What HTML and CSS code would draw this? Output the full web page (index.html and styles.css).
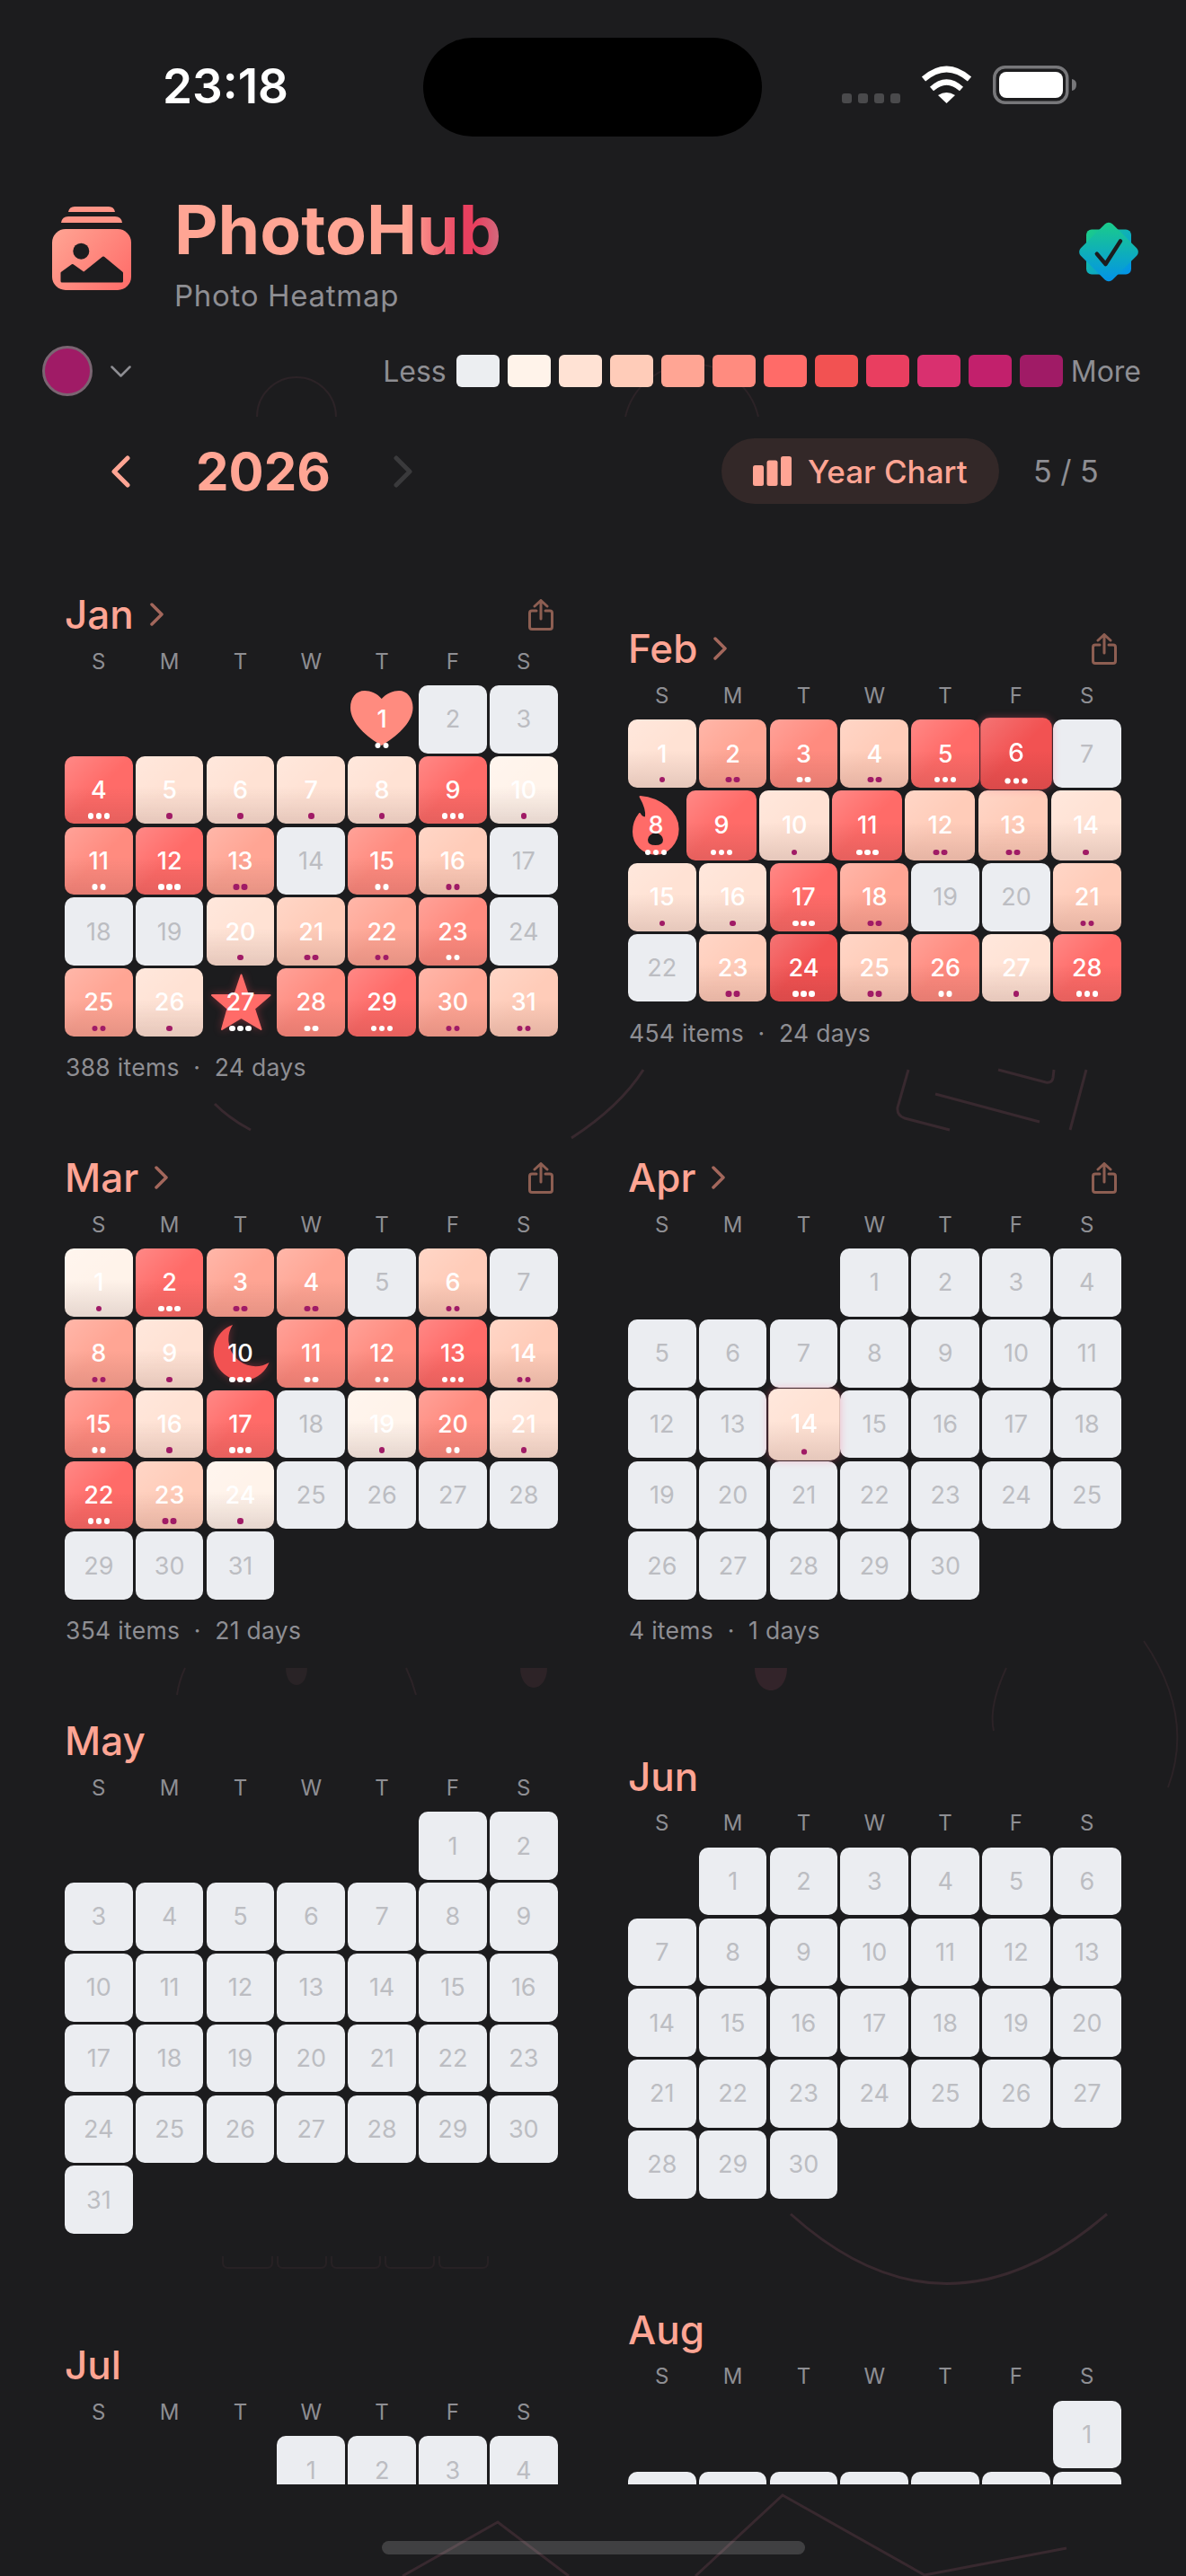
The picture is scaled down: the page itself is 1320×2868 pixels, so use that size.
FILE: index.html
```html
<!DOCTYPE html>
<html lang="en">
<head>
<meta charset="utf-8">
<title>PhotoHub</title>
<link rel="stylesheet" href="styles.css">
</head>
<body>
<div class="page">
<svg class="decor" width="1320" height="2868" viewBox="0 0 1320 2868" fill="none">
  <g class="faint">
    <path d="M286 464A44 44 0 0 1 374 464"/>
    <path d="M696 464A76 76 0 0 1 844 464"/>
    <path d="M206 1857Q199 1872 197 1887M452 1857Q459 1872 463 1887M1120 1857Q1100 1900 1106 1927M1273 1827Q1330 1910 1300 1990"/>
  </g>
  <g class="fainter">
    <path d="M248 2512V2519Q248 2525 254 2525H297Q303 2525 303 2519V2512M309 2512V2519Q309 2525 315 2525H357Q363 2525 363 2519V2512M369 2512V2519Q369 2525 375 2525H417Q423 2525 423 2519V2512M429 2512V2519Q429 2525 435 2525H477Q483 2525 483 2519V2512M489 2512V2519Q489 2525 495 2525H537Q543 2525 543 2519V2512"/>
  </g>
  <g class="line">
    <path d="M716 1191Q690 1232 636 1267"/>
    <path d="M239 1229Q256 1246 279 1258"/>
    <path d="M1011 1191L999 1233Q998 1242 1007 1245L1057 1258"/>
    <path d="M1111 1191L1164 1205Q1171 1206 1172 1200L1173 1191"/>
    <path d="M1041 1218L1157 1249"/>
    <path d="M1209 1191L1191 1258"/>
    <path d="M880 2465Q1052 2620 1232 2465"/>
    <path d="M448 2868L554 2808L633 2868"/>
    <path d="M774 2868L871 2778L1029 2867L1187 2837"/>
  </g>
  <path class="eye1" d="M318 1857H342C342 1868 337 1876 330 1876C323 1876 318 1868 318 1857Z"/>
  <path class="eye2" d="M579 1857H609C609 1870 602 1879 594 1879C586 1879 579 1870 579 1857Z"/>
  <path class="eye3" d="M840 1857H876C876 1872 868 1882 858 1882C848 1882 840 1872 840 1857Z"/>
</svg>

<header class="status">
  <div class="time">23:18</div>
  <div class="island"></div>
  <div class="status-icons">
    <div class="signal"><i></i><i></i><i></i><i></i></div>
    <svg class="wifi" width="57" height="42" viewBox="0 0 57 42" fill="none"><path d="M3 15Q28.500 -7 54 15" stroke="#fff" stroke-width="6.500"/><path d="M12 26Q28.500 11 45 26" stroke="#fff" stroke-width="6"/><path d="M19 33Q28.500 27 38 33L28.500 42Z" fill="#fff"/></svg>
    <svg class="battery" width="93" height="43" viewBox="0 0 93 43" fill="none"><rect x="1.750" y="1.750" width="81" height="39.500" rx="12" stroke="#77777a" stroke-width="3.500"/><rect x="7" y="7" width="71" height="29" rx="8" fill="#fff"/><path d="M88 15Q93 16 93 21Q93 27 88 28Z" fill="#77777a"/></svg>
  </div>
</header>

<section class="brand">
  <svg class="logo" width="88" height="93" viewBox="0 0 88 93">
    <defs><linearGradient id="lg" x1="0" y1="25" x2="88" y2="93" gradientUnits="userSpaceOnUse"><stop offset="0" stop-color="#ffa594"/><stop offset="1" stop-color="#ff6b68"/></linearGradient></defs>
    <path d="M18 6Q19 0 25 0H63Q69 0 70 6Z" fill="#ff9486"/>
    <path d="M10 18Q11 11 18 11H70Q77 11 78 18Z" fill="#ff9486"/>
    <rect x="0" y="25" width="88" height="68" rx="15" fill="url(#lg)"/>
    <circle cx="32.300" cy="49.700" r="9" fill="#1c1c1e"/>
    <path d="M11 74L22.700 65.500L35.300 74.500L57 57L77.500 74V83H11Z" fill="#1c1c1e" stroke="#1c1c1e" stroke-width="3" stroke-linejoin="round"/>
  </svg>
  <div class="brand-text">
    <h1 class="title">PhotoHub</h1>
    <p class="subtitle">Photo Heatmap</p>
  </div>
  <svg class="badge" width="66" height="67" viewBox="0 0 66 67">
    <defs><linearGradient id="bg" x1="6" y1="6" x2="60" y2="61" gradientUnits="userSpaceOnUse"><stop offset="0" stop-color="#1dd082"/><stop offset="1" stop-color="#008ef0"/></linearGradient></defs>
    <rect x="8" y="8.500" width="50" height="50" rx="6" fill="url(#bg)"/>
    <rect x="8" y="8.500" width="50" height="50" rx="6" fill="url(#bg)" transform="rotate(45 33 33.500)"/>
    <path d="M19.800 35.600L29.500 47L46 21.400" fill="none" stroke="#1c1c1e" stroke-width="4.500" stroke-linecap="round" stroke-linejoin="round"/>
  </svg>
</section>

<section class="legend">
  <div class="theme-dot"></div>
  <svg class="theme-chev" width="23" height="13" viewBox="0 0 23 13" fill="none"><path d="M1.500 1.500L11.500 11.500L21.500 1.500" stroke="#8e8e93" stroke-width="2.500" stroke-linecap="round" stroke-linejoin="round"/></svg>
  <div class="legend-scale">
    <span class="legend-text">Less</span>
    <i class="sw s0"></i><i class="sw s1"></i><i class="sw s2"></i><i class="sw s3"></i><i class="sw s4"></i><i class="sw s5"></i><i class="sw s6"></i><i class="sw s7"></i><i class="sw s8"></i><i class="sw s9"></i><i class="sw s10"></i><i class="sw s11"></i>
    <span class="legend-text">More</span>
  </div>
</section>

<section class="year-row">
  <svg class="year-prev" width="21" height="36" viewBox="0 0 21 36" fill="none"><path d="M18 3L3 18L18 33" stroke="#ffa594" stroke-width="5" stroke-linecap="round" stroke-linejoin="round"/></svg>
  <div class="year">2026</div>
  <svg class="year-next" width="21" height="36" viewBox="0 0 21 36" fill="none"><path d="M3 3L18 18L3 33" stroke="#3a3a3c" stroke-width="5" stroke-linecap="round" stroke-linejoin="round"/></svg>
  <div class="chart-pill">
    <svg width="43" height="33" viewBox="0 0 43 33" fill="#ffa594"><rect x="0" y="10" width="12" height="23" rx="2.500"/><rect x="15.500" y="4.500" width="12" height="28.500" rx="2.500"/><rect x="31" y="0" width="12" height="33" rx="2.500"/></svg>
    <span>Year Chart</span>
  </div>
  <div class="count">5 / 5</div>
</section>

<main class="months">
  <article class="month">
    <div class="mhead"><h2>Jan</h2><svg class="mchev" width="15" height="26" viewBox="0 0 15 26" fill="none"><path d="M2 2L13 13L2 24"/></svg><svg class="share" width="28" height="35" viewBox="0 0 28 35" fill="none"><path d="M14 22V2M7 8L14 1.500L21 8M9 13H4Q1.500 13 1.500 15.500V31Q1.500 33.500 4 33.500H24Q26.500 33.500 26.500 31V15.500Q26.500 13 24 13H19"/></svg></div>
    <div class="wd"><span>S</span><span>M</span><span>T</span><span>W</span><span>T</span><span>F</span><span>S</span></div>
    <div class="weeks">
      <div class="week"><div></div><div></div><div></div><div></div><div class="c shape w2"><svg viewBox="0 0 75.600 75.600"><path class="f5" d="M37.700 15C33 9 25 6 19 6C9 6 3 14 3 25C3 42 22 58 37.700 67C53 58 72.500 42 72.500 25C72.500 14 66 6 57 6C51 6 43 9 37.700 15Z"/></svg><span>1</span></div><div class="c">2</div><div class="c">3</div></div>
      <div class="week"><div class="c l6 w3">4</div><div class="c l2 p1">5</div><div class="c l2 p1">6</div><div class="c l2 p1">7</div><div class="c l2 p1">8</div><div class="c l6 w3">9</div><div class="c l1 p1">10</div></div>
      <div class="week"><div class="c l5 w2">11</div><div class="c l6 w3">12</div><div class="c l4 p2">13</div><div class="c">14</div><div class="c l5 w2">15</div><div class="c l3 p2">16</div><div class="c">17</div></div>
      <div class="week"><div class="c">18</div><div class="c">19</div><div class="c l2 p1">20</div><div class="c l3 p2">21</div><div class="c l4 p2">22</div><div class="c l5 w2">23</div><div class="c">24</div></div>
      <div class="week"><div class="c l4 p2">25</div><div class="c l2 p1">26</div><div class="c shape w3"><svg class="glow" viewBox="0 0 75.600 75.600"><path class="f6" d="M38.500 7.500L46 30H70.500L53 45L60.500 68L38.500 55L17 68L23.500 45L6 30H31Z"/></svg><span>27</span></div><div class="c l5 w2">28</div><div class="c l6 w3">29</div><div class="c l4 p2">30</div><div class="c l3 p2">31</div></div>
    </div>
    <p class="sum">388 items &nbsp;·&nbsp; 24 days</p>
  </article>

  <article class="month">
    <div class="mhead"><h2>Feb</h2><svg class="mchev" width="15" height="26" viewBox="0 0 15 26" fill="none"><path d="M2 2L13 13L2 24"/></svg><svg class="share" width="28" height="35" viewBox="0 0 28 35" fill="none"><path d="M14 22V2M7 8L14 1.500L21 8M9 13H4Q1.500 13 1.500 15.500V31Q1.500 33.500 4 33.500H24Q26.500 33.500 26.500 31V15.500Q26.500 13 24 13H19"/></svg></div>
    <div class="wd"><span>S</span><span>M</span><span>T</span><span>W</span><span>T</span><span>F</span><span>S</span></div>
    <div class="weeks">
      <div class="week"><div class="c l2 p1">1</div><div class="c l4 p2">2</div><div class="c l5 w2">3</div><div class="c l3 p2">4</div><div class="c l6 w3">5</div><div class="c l7 w3 peak">6</div><div class="c">7</div></div>
      <div class="week fire-week"><div class="c shape w3"><svg viewBox="0 0 62 77.600"><path class="f6" fill-rule="evenodd" d="M13.500 7C36 9 55.600 24 55.600 43C55.600 58 44 70.700 31 70.700C17 70.700 6 60 6 46C6 38 9 31 13 26C15 30 17 31 20 30C21 22 17 13 13.500 7ZM30.500 46C25 47 21 51 21 55C21 60 25 62 30.500 62C36 62 40 60 40 55C40 51 36 47 30.500 46Z"/></svg><span>8</span></div><div class="c l6 w3">9</div><div class="c l2 p1">10</div><div class="c l6 w3">11</div><div class="c l3 p2">12</div><div class="c l3 p2">13</div><div class="c l2 p1">14</div></div>
      <div class="week"><div class="c l2 p1">15</div><div class="c l2 p1">16</div><div class="c l6 w3">17</div><div class="c l4 p2">18</div><div class="c">19</div><div class="c">20</div><div class="c l3 p2">21</div></div>
      <div class="week"><div class="c">22</div><div class="c l3 p2">23</div><div class="c l7 w3">24</div><div class="c l3 p2">25</div><div class="c l5 w2">26</div><div class="c l2 p1">27</div><div class="c l6 w3">28</div></div>
    </div>
    <p class="sum">454 items &nbsp;·&nbsp; 24 days</p>
  </article>

  <article class="month">
    <div class="mhead"><h2>Mar</h2><svg class="mchev" width="15" height="26" viewBox="0 0 15 26" fill="none"><path d="M2 2L13 13L2 24"/></svg><svg class="share" width="28" height="35" viewBox="0 0 28 35" fill="none"><path d="M14 22V2M7 8L14 1.500L21 8M9 13H4Q1.500 13 1.500 15.500V31Q1.500 33.500 4 33.500H24Q26.500 33.500 26.500 31V15.500Q26.500 13 24 13H19"/></svg></div>
    <div class="wd"><span>S</span><span>M</span><span>T</span><span>W</span><span>T</span><span>F</span><span>S</span></div>
    <div class="weeks">
      <div class="week"><div class="c l1 p1">1</div><div class="c l6 w3">2</div><div class="c l4 p2">3</div><div class="c l4 p2">4</div><div class="c">5</div><div class="c l3 p2">6</div><div class="c">7</div></div>
      <div class="week"><div class="c l4 p2">8</div><div class="c l2 p1">9</div><div class="c shape w3"><svg class="glow" viewBox="0 0 75.600 75.600"><path class="f7" d="M29 6A32 32 0 1 0 69.500 48A30 30 0 0 1 29 6Z"/></svg><span>10</span></div><div class="c l5 w2">11</div><div class="c l5 w2">12</div><div class="c l6 w3">13</div><div class="c l3 p2">14</div></div>
      <div class="week"><div class="c l5 w2">15</div><div class="c l2 p1">16</div><div class="c l6 w3">17</div><div class="c">18</div><div class="c l1 p1">19</div><div class="c l5 w2">20</div><div class="c l2 p1">21</div></div>
      <div class="week"><div class="c l6 w3">22</div><div class="c l3 p2">23</div><div class="c l1 p1">24</div><div class="c">25</div><div class="c">26</div><div class="c">27</div><div class="c">28</div></div>
      <div class="week"><div class="c">29</div><div class="c">30</div><div class="c">31</div></div>
    </div>
    <p class="sum">354 items &nbsp;·&nbsp; 21 days</p>
  </article>

  <article class="month">
    <div class="mhead"><h2>Apr</h2><svg class="mchev" width="15" height="26" viewBox="0 0 15 26" fill="none"><path d="M2 2L13 13L2 24"/></svg><svg class="share" width="28" height="35" viewBox="0 0 28 35" fill="none"><path d="M14 22V2M7 8L14 1.500L21 8M9 13H4Q1.500 13 1.500 15.500V31Q1.500 33.500 4 33.500H24Q26.500 33.500 26.500 31V15.500Q26.500 13 24 13H19"/></svg></div>
    <div class="wd"><span>S</span><span>M</span><span>T</span><span>W</span><span>T</span><span>F</span><span>S</span></div>
    <div class="weeks">
      <div class="week"><div></div><div></div><div></div><div class="c">1</div><div class="c">2</div><div class="c">3</div><div class="c">4</div></div>
      <div class="week"><div class="c">5</div><div class="c">6</div><div class="c">7</div><div class="c">8</div><div class="c">9</div><div class="c">10</div><div class="c">11</div></div>
      <div class="week"><div class="c">12</div><div class="c">13</div><div class="c l2 p1 peak">14</div><div class="c">15</div><div class="c">16</div><div class="c">17</div><div class="c">18</div></div>
      <div class="week"><div class="c">19</div><div class="c">20</div><div class="c">21</div><div class="c">22</div><div class="c">23</div><div class="c">24</div><div class="c">25</div></div>
      <div class="week"><div class="c">26</div><div class="c">27</div><div class="c">28</div><div class="c">29</div><div class="c">30</div></div>
    </div>
    <p class="sum">4 items &nbsp;·&nbsp; 1 days</p>
  </article>

  <article class="month">
    <div class="mhead"><h2>May</h2></div>
    <div class="wd"><span>S</span><span>M</span><span>T</span><span>W</span><span>T</span><span>F</span><span>S</span></div>
    <div class="weeks">
      <div class="week"><div></div><div></div><div></div><div></div><div></div><div class="c">1</div><div class="c">2</div></div>
      <div class="week"><div class="c">3</div><div class="c">4</div><div class="c">5</div><div class="c">6</div><div class="c">7</div><div class="c">8</div><div class="c">9</div></div>
      <div class="week"><div class="c">10</div><div class="c">11</div><div class="c">12</div><div class="c">13</div><div class="c">14</div><div class="c">15</div><div class="c">16</div></div>
      <div class="week"><div class="c">17</div><div class="c">18</div><div class="c">19</div><div class="c">20</div><div class="c">21</div><div class="c">22</div><div class="c">23</div></div>
      <div class="week"><div class="c">24</div><div class="c">25</div><div class="c">26</div><div class="c">27</div><div class="c">28</div><div class="c">29</div><div class="c">30</div></div>
      <div class="week"><div class="c">31</div></div>
    </div>
  </article>

  <article class="month">
    <div class="mhead"><h2>Jun</h2></div>
    <div class="wd"><span>S</span><span>M</span><span>T</span><span>W</span><span>T</span><span>F</span><span>S</span></div>
    <div class="weeks">
      <div class="week"><div></div><div class="c">1</div><div class="c">2</div><div class="c">3</div><div class="c">4</div><div class="c">5</div><div class="c">6</div></div>
      <div class="week"><div class="c">7</div><div class="c">8</div><div class="c">9</div><div class="c">10</div><div class="c">11</div><div class="c">12</div><div class="c">13</div></div>
      <div class="week"><div class="c">14</div><div class="c">15</div><div class="c">16</div><div class="c">17</div><div class="c">18</div><div class="c">19</div><div class="c">20</div></div>
      <div class="week"><div class="c">21</div><div class="c">22</div><div class="c">23</div><div class="c">24</div><div class="c">25</div><div class="c">26</div><div class="c">27</div></div>
      <div class="week"><div class="c">28</div><div class="c">29</div><div class="c">30</div></div>
    </div>
  </article>

  <article class="month">
    <div class="mhead"><h2>Jul</h2></div>
    <div class="wd"><span>S</span><span>M</span><span>T</span><span>W</span><span>T</span><span>F</span><span>S</span></div>
    <div class="weeks">
      <div class="week"><div></div><div></div><div></div><div class="c">1</div><div class="c">2</div><div class="c">3</div><div class="c">4</div></div>
      <div class="week"></div>
      <div class="week"></div>
      <div class="week"></div>
      <div class="week"></div>
    </div>
  </article>

  <article class="month">
    <div class="mhead"><h2>Aug</h2></div>
    <div class="wd"><span>S</span><span>M</span><span>T</span><span>W</span><span>T</span><span>F</span><span>S</span></div>
    <div class="weeks">
      <div class="week"><div></div><div></div><div></div><div></div><div></div><div></div><div class="c">1</div></div>
      <div class="week"><div class="c"></div><div class="c"></div><div class="c"></div><div class="c"></div><div class="c"></div><div class="c"></div><div class="c"></div></div>
      <div class="week"></div>
      <div class="week"></div>
      <div class="week"></div>
      <div class="week"></div>
    </div>
  </article>
</main>
<div class="home-bar"></div>
</div>
</body>
</html>
```

FILE: styles.css
```css
* { box-sizing: border-box; }
html, body { margin: 0; padding: 0; background: #1c1c1e; }
body { font-family: Inter, "Liberation Sans", sans-serif; color: #fff; }
h1, h2, p { margin: 0; }

.page { position: relative; width: 1320px; height: 2868px; overflow: hidden; background: #1c1c1e; display: flex; flex-direction: column; }
.page > * { position: relative; z-index: 1; flex: none; }
.page > .decor { position: absolute; left: 0; top: 0; z-index: 0; }
.faint path { stroke: #2c2327; stroke-width: 2; }
.fainter path { stroke: #272124; stroke-width: 2; }
.line path { stroke: #38292f; stroke-width: 3; }
.eye1 { fill: #292326; }
.eye2 { fill: #2d2327; }
.eye3 { fill: #33242a; }

/* status bar */
.status { display: flex; align-items: center; height: 110px; margin-top: 42px; padding-left: 181px; }
.time { width: 290px; font-size: 53px; font-weight: 600; line-height: 60px; margin-top: -2px; }
.island { width: 377px; height: 110px; border-radius: 55px; background: #000; }
.status-icons { display: flex; align-items: flex-end; margin-left: 89px; margin-top: -6px; height: 43px; }
.signal { display: flex; gap: 7px; margin-bottom: 1px; }
.signal i { width: 11px; height: 11px; border-radius: 3px; background: #4a4a4c; }
.wifi { margin-left: 23px; margin-bottom: 1px; }
.battery { margin-left: 23px; }

/* brand */
.brand { display: flex; align-items: flex-start; margin-top: 66px; padding: 0 53.500px 0 58px; }
.logo { margin-top: 12px; }
.brand-text { margin-left: 48px; flex: 1; }
.title { font-size: 75px; line-height: 76px; font-weight: 700; background: linear-gradient(90deg, #ffa594 0%, #ffa594 71%, #e8405f 88%, #e8405f 92%, #d06d80 100%); -webkit-background-clip: text; background-clip: text; color: transparent; width: max-content; }
.subtitle { margin-top: 15px; font-size: 33px; line-height: 40px; letter-spacing: .7px; color: #8e8e93; }
.badge { margin-top: 29px; }

/* legend */
.legend { display: flex; align-items: center; height: 56px; margin-top: 36px; padding: 0 50px 0 47px; }
.theme-dot { width: 56px; height: 56px; border-radius: 50%; background: #a01b66; border: 3px solid #7a6572; }
.theme-chev { margin-left: 20px; }
.legend-scale { display: flex; align-items: center; gap: 9px; margin-left: auto; }
.legend-text { font-size: 32px; color: #8e8e93; }
.legend-text:first-child { margin-right: 2px; }
.sw { width: 48px; height: 36px; border-radius: 6px; }
.s0 { background: #eceef1; } .s1 { background: #fff3ea; } .s2 { background: #ffe2d4; } .s3 { background: #ffccb9; }
.s4 { background: #ffa594; } .s5 { background: #ff8b7f; } .s6 { background: #ff6b68; } .s7 { background: #f25252; }
.s8 { background: #e93e60; } .s9 { background: #d9306f; } .s10 { background: #c2206c; } .s11 { background: #a01b66; }

/* year row */
.year-row { display: flex; align-items: center; height: 73px; margin-top: 47px; padding-left: 124px; }
.year { margin-left: 73px; width: 147px; font-size: 58px; font-weight: 700; color: #ffa594; line-height: 70px; }
.year-next { margin-left: 73px; }
.chart-pill { display: flex; align-items: center; gap: 18px; width: 309px; height: 73px; margin-left: 344px; padding-left: 35px; border-radius: 37px; background: #332828; color: #ffa594; font-size: 35px; font-weight: 500; }
.count { margin-left: 38px; font-size: 34px; color: #8e8e93; }

/* months */
.months { display: grid; grid-template-columns: 548.600px 548.600px; column-gap: 78.400px; row-gap: 82px; align-items: center; align-content: start; height: 2205px; padding: 98px 0 0 72px; overflow: hidden; }
.mhead { display: flex; align-items: center; height: 50px; margin-bottom: 12.600px; }
.mhead h2 { font-size: 44px; line-height: 50px; font-weight: 500; color: #ffa594; }
.mchev { margin-left: 18px; }
.mchev path { stroke: #a3675c; stroke-width: 3.500; stroke-linecap: round; stroke-linejoin: round; }
.share { margin-left: auto; margin-right: 4.600px; }
.share path { stroke: #8d5e52; stroke-width: 3; stroke-linecap: round; stroke-linejoin: round; }
.wd { display: grid; grid-template-columns: repeat(7, 1fr); column-gap: 3.200px; height: 30px; margin-bottom: 11.400px; font-size: 24px; line-height: 30px; color: #8e8e93; text-align: center; }
.weeks { display: flex; flex-direction: column; gap: 3.200px; }
.week { display: grid; grid-template-columns: repeat(7, 1fr); column-gap: 3.200px; height: 75.600px; }
.fire-week { grid-template-columns: 62px repeat(6, 1fr); height: 77.600px; }
.c { position: relative; display: flex; align-items: center; justify-content: center; border-radius: 10px; background: #ebedf1; color: #bcbdc2; font-size: 27px; font-weight: 400; }
.c[class*=" l"], .shape { color: #fff; font-weight: 500; }
.l1, .l2, .l3, .l4, .l5, .l6, .l7 { background-image: linear-gradient(180deg, rgba(60,20,20,0) 45%, rgba(60,20,20,.13) 100%), linear-gradient(135deg, rgba(255,255,255,.2) 0%, rgba(255,255,255,0) 50%); }
.l1 { background-color: #fff3ea; }
.l2 { background-color: #ffe2d4; }
.l3 { background-color: #ffccb9; }
.l4 { background-color: #ffa594; }
.l5 { background-color: #ff8b7f; }
.l6 { background-color: #ff6b68; }
.l7 { background-color: #f25252; }
.shape { background: none; }
.shape svg { position: absolute; left: 0; top: 0; width: 100%; height: 100%; overflow: visible; }
.shape span { position: relative; }
.glow { filter: drop-shadow(0 0 5px rgba(255, 70, 90, .4)); }
.f5 { fill: #ff8b7f; }
.f6 { fill: #ff6b68; stroke: #ff6b68; stroke-width: 2; stroke-linejoin: round; }
.f7 { fill: #f25252; }
.peak { transform: scale(1.05); z-index: 2; box-shadow: 0 0 8px rgba(255, 90, 120, .35); }

.p1::after, .p2::after, .w2::after, .w3::after { content: ""; position: absolute; left: 50%; bottom: 5.500px; width: 6.500px; height: 6.500px; margin-left: -3.250px; border-radius: 50%; }
.p1::after { background: #a01b66; }
.p2::after { background: #a01b66; transform: translateX(-4.500px); box-shadow: 9px 0 0 #a01b66; }
.w2::after { background: #fff; transform: translateX(-4.500px); box-shadow: 9px 0 0 #fff; }
.w3::after { background: #fff; transform: translateX(-9px); box-shadow: 9px 0 0 #fff, 18px 0 0 #fff; }

.sum { margin-top: 18.500px; font-size: 26.500px; line-height: 32px; letter-spacing: .3px; color: #8e8e93; padding-left: 1px; }

.home-bar { position: absolute !important; left: 425px; top: 2829px; width: 471px; height: 15px; border-radius: 7.500px; background: rgba(255, 255, 255, .16); }
```
